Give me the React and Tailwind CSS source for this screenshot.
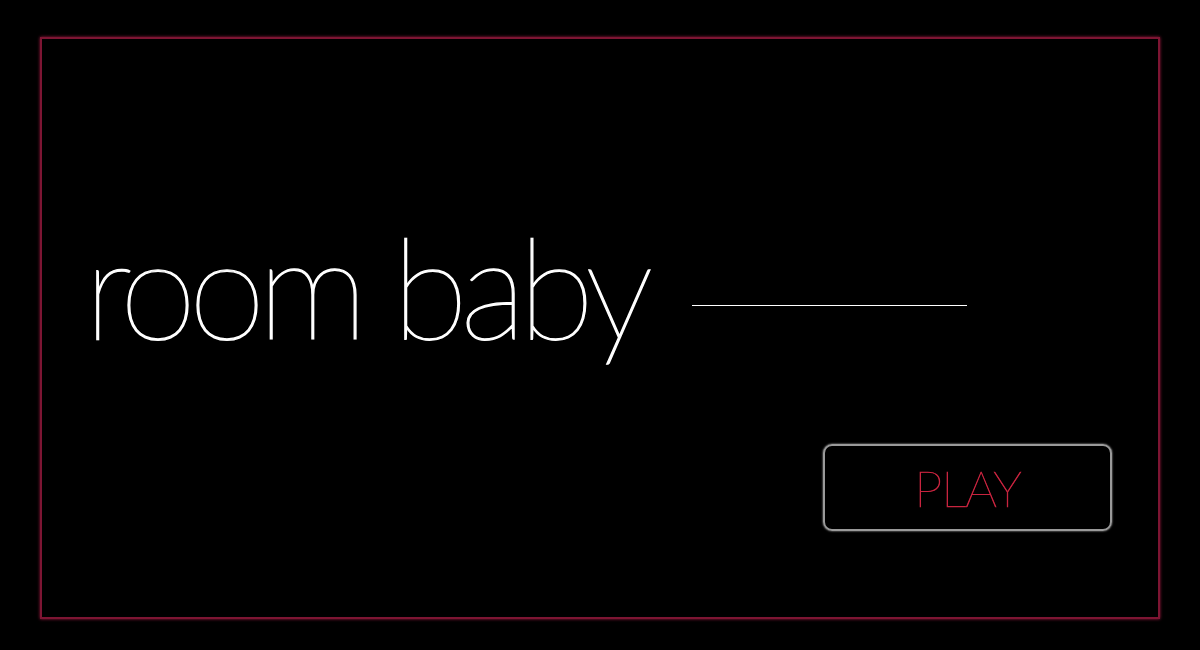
export default function App() {
  return (
    <div className="w-[1200px] h-[650px] bg-black overflow-hidden" style={{ fontFamily: "Lato, 'Noto Sans', sans-serif" }}>
      <div className="ml-[40px] mt-[37px] w-[1120px] h-[582px] border-2 border-[#7d1533] shadow-[0_0_3px_#a01a40] flex flex-col">
        <div className="flex items-start pl-[42px] pt-[176px]">
          <h1 className="text-white text-[140px] leading-[140px] font-thin tracking-[-8px] [-webkit-text-stroke:1.3px_white]">room baby</h1>
          <div className="ml-[46px] mt-[90px] w-[275px] h-px bg-white" />
        </div>
        <div className="flex justify-end pr-[46px] mt-[89px]">
          <button className="w-[289px] h-[87px] rounded-[9px] border-2 border-[#9a9a9a] shadow-[0_0_2px_#ccc] text-[#c8243f] text-[50px] font-thin tracking-[-1px] leading-none flex items-center justify-center [-webkit-text-stroke:0.7px_#c8243f]">
            PLAY
          </button>
        </div>
      </div>
    </div>
  );
}
